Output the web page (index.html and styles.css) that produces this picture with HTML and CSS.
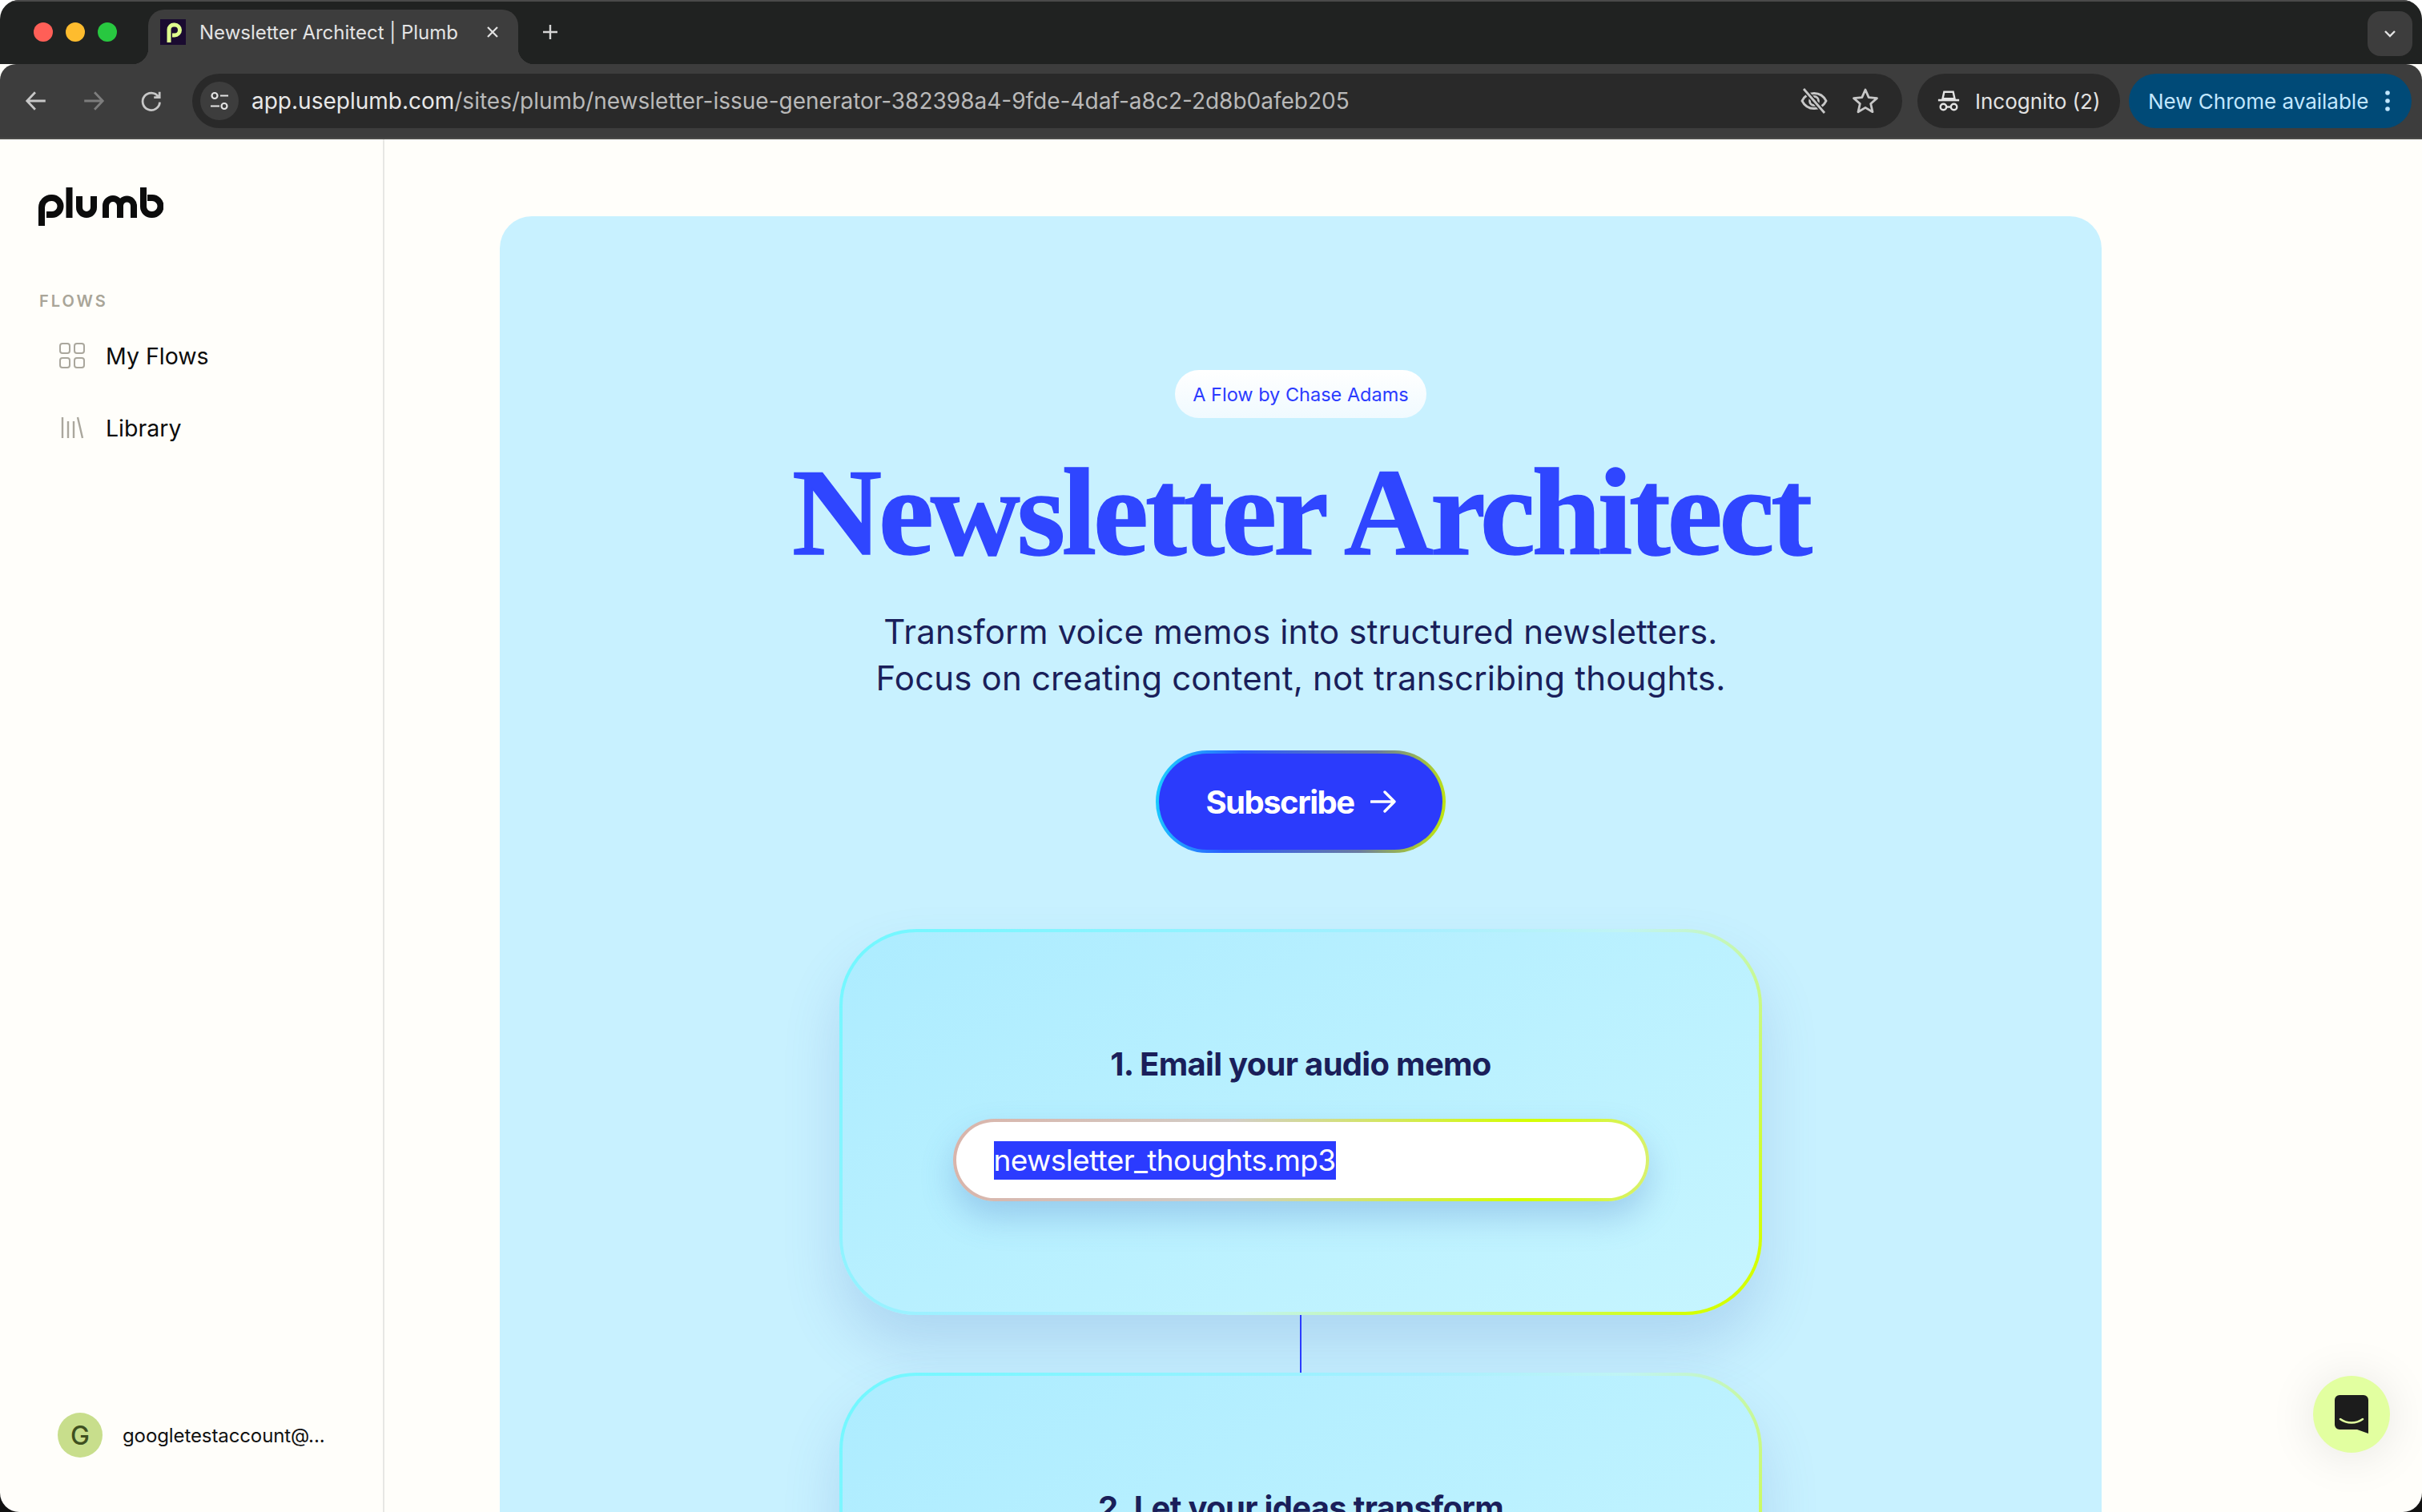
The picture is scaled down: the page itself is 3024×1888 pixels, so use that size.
FILE: index.html
```html
<!DOCTYPE html>
<html lang="en">

<head>
  <meta charset="UTF-8">
  <title>Newsletter Architect | Plumb</title>
  <link rel="stylesheet" href="styles.css">
</head>

<body>
  <div class="window">

    <!-- browser chrome -->
    <div class="tabStrip">
      <div class="lights">
        <span class="light red"></span>
        <span class="light yellow"></span>
        <span class="light green"></span>
      </div>
      <div class="tab">
        <svg class="favicon" viewBox="0 0 32 32">
          <rect width="32" height="32" fill="#1a0b30"/>
          <path d="M11 29V13a6 6 0 0 1 6-6h1a6.500 6.500 0 0 1 0 13h-3" fill="none" stroke="#dfff8e" stroke-width="5"/>
        </svg>
        <span class="tabTitle">Newsletter Architect | Plumb</span>
        <svg class="tabClose" viewBox="0 0 20 20"><path d="M4 4l12 12M16 4L4 16" stroke="#e3e3e3" stroke-width="2.200"/></svg>
      </div>
      <svg class="newTab" viewBox="0 0 24 24"><path d="M12 3v18M3 12h18" stroke="#d5d5d5" stroke-width="2.400"/></svg>
      <div class="tabSearch">
        <svg viewBox="0 0 20 20" width="20" height="20"><path d="M4 7l6 6 6-6" fill="none" stroke="#e3e3e3" stroke-width="2.400"/></svg>
      </div>
    </div>

    <div class="toolbar">
      <svg class="navIcon" viewBox="0 0 28 28"><path d="M25 14H4M13 4L3.500 14 13 24" fill="none" stroke="#c7c7c7" stroke-width="2.600"/></svg>
      <svg class="navIcon" viewBox="0 0 28 28"><path d="M3 14h21M15 4l9.500 10L15 24" fill="none" stroke="#7d7d7d" stroke-width="2.600"/></svg>
      <svg class="navIcon" viewBox="0 0 28 28"><path d="M22 9a10 10 0 1 0 1.800 6.500M23.500 3.500V10H17" fill="none" stroke="#c7c7c7" stroke-width="2.600"/></svg>

      <div class="urlBar">
        <span class="siteInfo">
          <svg viewBox="0 0 28 28" width="28" height="28">
            <circle cx="8" cy="7.500" r="3.500" fill="none" stroke="#e3e3e3" stroke-width="2.200"/>
            <circle cx="20" cy="20.500" r="3.500" fill="none" stroke="#e3e3e3" stroke-width="2.200"/>
            <path d="M15 7.500h10M3 20.500h11" stroke="#e3e3e3" stroke-width="2.200"/>
          </svg>
        </span>
        <span class="url"><span class="urlHost">app.useplumb.com</span>/sites/plumb/newsletter-issue-generator-382398a4-9fde-4daf-a8c2-2d8b0afeb205</span>
        <svg class="urlIcon" viewBox="0 0 36 36">
          <path d="M3 18c3-6 8.500-9.500 15-9.500S30 12 33 18c-3 6-8.500 9.500-15 9.500S6 24 3 18z" fill="none" stroke="#c7c7c7" stroke-width="2.800"/>
          <circle cx="18" cy="18" r="5.500" fill="none" stroke="#c7c7c7" stroke-width="2.800"/>
          <path d="M5 3l26 30" stroke="#292929" stroke-width="6"/>
          <path d="M5 3l26 30" stroke="#c7c7c7" stroke-width="2.800"/>
        </svg>
        <svg class="urlIcon" viewBox="0 0 36 36">
          <path d="M18 4l4.200 9.600 10.300 1-7.800 6.900 2.300 10.200L18 26.400l-9 5.300 2.300-10.200-7.800-6.900 10.300-1z" fill="none" stroke="#c7c7c7" stroke-width="2.800" stroke-linejoin="round"/>
        </svg>
      </div>

      <div class="incognito">
        <svg viewBox="0 0 32 32" width="30" height="30">
          <path d="M8 13l2-9h12l2 9z" fill="none" stroke="#e3e3e3" stroke-width="2.600"/>
          <path d="M2 15h28" stroke="#e3e3e3" stroke-width="2.800"/>
          <circle cx="9" cy="24" r="4" fill="none" stroke="#e3e3e3" stroke-width="2.600"/>
          <circle cx="23" cy="24" r="4" fill="none" stroke="#e3e3e3" stroke-width="2.600"/>
          <path d="M13 24h6" stroke="#e3e3e3" stroke-width="2.600"/>
        </svg>
        <span>Incognito (2)</span>
      </div>

      <div class="updateChip">
        <span>New Chrome available</span>
        <svg viewBox="0 0 8 28" width="8" height="28">
          <circle cx="4" cy="4" r="2.800" fill="#c2e7ff"/>
          <circle cx="4" cy="14" r="2.800" fill="#c2e7ff"/>
          <circle cx="4" cy="24" r="2.800" fill="#c2e7ff"/>
        </svg>
      </div>
    </div>

    <!-- page -->
    <div class="app">
      <div class="sidebar">
        <svg class="logo" viewBox="0 0 156 50" role="img" aria-label="plumb">
          <g fill="none" stroke="#0c0c0c" stroke-width="8">
            <path d="M4 50V27a12 12 0 0 1 12-12h1a10.500 10.500 0 0 1 0 21H10"/>
            <path d="M38.500 2v38"/>
            <path d="M51 13v14a9 9 0 0 0 18 0V13"/>
            <path d="M84 40V25a9 9 0 0 1 18 0v15M102 25a8.500 8.500 0 0 1 17 0v15"/>
            <path d="M131 2v24a10 10 0 0 0 10 10h1a10.500 10.500 0 0 0 0-21h-6"/>
          </g>
        </svg>

        <div class="navLabel">FLOWS</div>

        <a class="navItem">
          <svg class="navItemIcon" viewBox="0 0 32 32">
            <g fill="none" stroke="#aaa79d" stroke-width="2">
              <rect x="1" y="1" width="12" height="12" rx="3"/>
              <rect x="19" y="1" width="12" height="12" rx="3"/>
              <rect x="1" y="19" width="12" height="12" rx="3"/>
              <rect x="19" y="19" width="12" height="12" rx="3"/>
            </g>
          </svg>
          <span>My Flows</span>
        </a>
        <a class="navItem">
          <svg class="navItemIcon" viewBox="0 0 32 32">
            <path d="M4 3v26M11 8v21M18 8v21M23 3l6 26" fill="none" stroke="#aaa79d" stroke-width="2.400"/>
          </svg>
          <span>Library</span>
        </a>

        <div class="userRow">
          <span class="avatar">G</span>
          <span class="userName">googletestaccount@...</span>
        </div>
      </div>

      <div class="main">
        <div class="hero">
          <div class="byline">A Flow by Chase Adams</div>
          <h1 class="title">Newsletter Architect</h1>
          <p class="subtitle">Transform voice memos into structured newsletters.<br>Focus on creating content, not transcribing thoughts.</p>
          <button class="subscribe">
            Subscribe
            <svg viewBox="0 0 32 28" width="32" height="28"><path d="M1 14h29M18 2l12 12-12 12" fill="none" stroke="#fff" stroke-width="3.400" stroke-linecap="round" stroke-linejoin="round"/></svg>
          </button>

          <div class="step">
            <h2 class="stepTitle">1. Email your audio memo</h2>
            <div class="fileInput"><span class="selected">newsletter_thoughts.mp3</span></div>
          </div>
          <div class="connector"></div>
          <div class="step">
            <h2 class="stepTitle">2. Let your ideas transform</h2>
          </div>
        </div>
      </div>
    </div>

    <div class="chatBubble">
      <svg viewBox="0 0 42 48" width="42" height="48">
        <path d="M6 0h30a6 6 0 0 1 6 6v42l-14-5H6a6 6 0 0 1-6-6V6a6 6 0 0 1 6-6z" fill="#1c1c1c"/>
        <path d="M7 30c8 6 20 6 28 0" fill="none" stroke="#e2ffa0" stroke-width="2.600" stroke-linecap="round"/>
      </svg>
    </div>

  </div>
</body>

</html>
```

FILE: styles.css
```css
html {
  background: linear-gradient(#fff 50%, #111 50%);
}

body {
  margin: 0;
  height: 1888px;
  overflow: hidden;
  font-family: Inter, "Liberation Sans", sans-serif;
}

.window {
  position: relative;
  height: 1888px;
  border-radius: 24px;
  overflow: hidden;
  background: #fffefa;
  display: flex;
  flex-direction: column;
}

/* browser chrome */

.tabStrip {
  height: 78px;
  border-top: 2px solid #4a4a4a;
  background: #202221;
  display: flex;
  align-items: flex-end;
  flex-shrink: 0;
}

.lights {
  display: flex;
  gap: 16px;
  padding: 0 0 28px 42px;
  width: 143px;
}

.light {
  width: 24px;
  height: 24px;
  border-radius: 50%;
}

.red { background: #ff5f57; }
.yellow { background: #febc2e; }
.green { background: #28c840; }

.tab {
  position: relative;
  width: 462px;
  height: 68px;
  box-sizing: border-box;
  padding: 0 22px 12px 15px;
  background: #3d3d3d;
  border-radius: 20px 20px 0 0;
  display: flex;
  align-items: center;
}

.tab::before,
.tab::after {
  content: '';
  position: absolute;
  bottom: 0;
  width: 20px;
  height: 20px;
}

.tab::before {
  left: -20px;
  background: radial-gradient(circle at 0 0, #202221 20px, #3d3d3d 20.500px);
}

.tab::after {
  right: -20px;
  background: radial-gradient(circle at 100% 0, #202221 20px, #3d3d3d 20.500px);
}

.favicon {
  width: 32px;
  height: 32px;
  flex-shrink: 0;
}

.tabTitle {
  margin-left: 17px;
  font-size: 24px;
  color: #e3e3e3;
  white-space: nowrap;
  flex: 1;
}

.tabClose {
  width: 20px;
  height: 20px;
}

.newTab {
  width: 24px;
  height: 24px;
  margin: 0 0 28px 28px;
}

.tabSearch {
  margin: 0 12px 10px auto;
  width: 56px;
  height: 56px;
  border-radius: 16px;
  background: #3d3d3d;
  display: flex;
  align-items: center;
  justify-content: center;
}

.toolbar {
  height: 94px;
  box-sizing: border-box;
  padding: 0 12px 0 30px;
  background: #3d3d3d;
  border-bottom: 2px solid #4b4b49;
  border-radius: 20px 20px 0 0;
  display: flex;
  align-items: center;
  flex-shrink: 0;
}

.navIcon {
  width: 30px;
  height: 30px;
  margin-right: 42px;
}

.navIcon:nth-child(3) {
  margin-right: 36px;
}

.urlBar {
  width: 2135px;
  height: 68px;
  box-sizing: border-box;
  padding: 0 28px 0 10px;
  background: #292929;
  border-radius: 34px;
  display: flex;
  align-items: center;
}

.siteInfo {
  width: 48px;
  height: 48px;
  border-radius: 50%;
  background: #3d3d3d;
  display: flex;
  align-items: center;
  justify-content: center;
}

.url {
  margin-left: 16px;
  font-size: 28px;
  color: #b9b9b9;
  white-space: nowrap;
  flex: 1;
}

.urlHost {
  color: #e8e8e8;
}

.urlIcon {
  width: 36px;
  height: 36px;
  margin-left: 28px;
}

.incognito {
  margin-left: 19px;
  width: 253px;
  height: 68px;
  box-sizing: border-box;
  padding-left: 24px;
  border-radius: 34px;
  background: #292929;
  color: #e3e3e3;
  font-size: 26px;
  display: flex;
  align-items: center;
  gap: 18px;
}

.updateChip {
  margin-left: 11px;
  width: 353px;
  height: 68px;
  box-sizing: border-box;
  padding: 0 26px 0 24px;
  border-radius: 34px;
  background: #004a77;
  color: #c2e7ff;
  font-size: 26px;
  display: flex;
  align-items: center;
  justify-content: space-between;
  white-space: nowrap;
}

/* page */

.app {
  flex: 1;
  display: flex;
  min-height: 0;
}

.sidebar {
  width: 480px;
  box-sizing: border-box;
  border-right: 2px solid #e7e7e4;
  padding: 58px 0 0 48px;
  display: flex;
  flex-direction: column;
  flex-shrink: 0;
}

.logo {
  width: 156px;
  height: 50px;
  flex-shrink: 0;
}

.navLabel {
  margin: 82px 0 11px 1px;
  font-size: 20px;
  font-weight: 600;
  letter-spacing: 3px;
  color: #a9a598;
}

.navItem {
  height: 90px;
  padding-left: 26px;
  display: flex;
  align-items: center;
  gap: 26px;
  font-size: 28.500px;
  color: #0c0c0c;
}

.navItemIcon {
  width: 32px;
  height: 32px;
}

.userRow {
  margin-top: auto;
  margin-bottom: 68px;
  padding-left: 24px;
  display: flex;
  align-items: center;
  gap: 25px;
}

.avatar {
  width: 56px;
  height: 56px;
  border-radius: 50%;
  background: #c8de8c;
  color: #3f5020;
  font-size: 32px;
  font-weight: 500;
  display: flex;
  align-items: center;
  justify-content: center;
}

.userName {
  font-size: 24px;
  letter-spacing: -0.100px;
  color: #111;
  white-space: nowrap;
}

.main {
  flex: 1;
  min-width: 0;
  padding: 96px 0 0 144px;
}

.hero {
  width: 2000px;
  box-sizing: border-box;
  height: 1800px;
  padding-top: 192px;
  background: #c8f1ff;
  border-radius: 40px;
  display: flex;
  flex-direction: column;
  align-items: center;
}

.byline {
  height: 60px;
  width: 314px;
  flex-shrink: 0;
  border-radius: 30px;
  background: linear-gradient(#fff, #f0faff);
  color: #2b3bff;
  font-size: 23.500px;
  display: flex;
  align-items: center;
  justify-content: center;
  white-space: nowrap;
}

.title {
  margin: 28px 0 0;
  flex-shrink: 0;
  font-family: "Liberation Serif", serif;
  font-weight: 700;
  font-size: 155px;
  line-height: 180px;
  letter-spacing: -4px;
  -webkit-text-stroke: 1.500px #2f46ff;
  color: #2f46ff;
  white-space: nowrap;
}

.subtitle {
  margin: 30px 0 0;
  flex-shrink: 0;
  font-size: 42px;
  line-height: 58px;
  letter-spacing: 0.160px;
  color: #1a1f5a;
  text-align: center;
  white-space: nowrap;
}

.subscribe {
  margin-top: 61px;
  width: 362px;
  height: 128px;
  border: 4px solid transparent;
  border-radius: 64px;
  background: linear-gradient(#2b3bfc, #2b3bfc) padding-box,
    linear-gradient(100deg, #18d8ff 0%, #2b5bff 28%, #6a7ba0 72%, #c8f000 100%) border-box;
  color: #fff;
  font-family: inherit;
  font-size: 40px;
  font-weight: 700;
  letter-spacing: -1.500px;
  display: flex;
  align-items: center;
  justify-content: center;
  gap: 20px;
  flex-shrink: 0;
}

.step {
  width: 1152px;
  height: 482px;
  flex-shrink: 0;
  box-sizing: border-box;
  padding-top: 135px;
  border: 4px solid transparent;
  border-radius: 96px;
  background: linear-gradient(150deg, #adecff, #c6f5ff) padding-box,
    linear-gradient(135deg, #6ff8ff 0%, #a8efff 45%, #c0f4f4 60%, #d4ff00 95%) border-box;
  box-shadow: 0 40px 70px rgba(70, 110, 190, 0.2);
  display: flex;
  flex-direction: column;
  align-items: center;
}

.subscribe + .step {
  margin-top: 95px;
}

.stepTitle {
  margin: 0;
  font-size: 40px;
  font-weight: 700;
  line-height: 60px;
  letter-spacing: -0.700px;
  color: #1a1f5a;
  white-space: nowrap;
}

.fileInput {
  margin-top: 38px;
  width: 869px;
  height: 103px;
  box-sizing: border-box;
  padding-left: 47px;
  border: 4px solid transparent;
  border-radius: 52px;
  background: linear-gradient(#fff, #fff) padding-box,
    linear-gradient(95deg, #d9b4aa 0%, #d2cdc6 40%, #d4ff00 82%, #d8f070 100%) border-box;
  box-shadow: 0 20px 40px rgba(70, 110, 190, 0.28);
  display: flex;
  align-items: center;
}

.selected {
  background: #2b3bff;
  color: #fff;
  font-size: 37px;
  line-height: 48px;
  letter-spacing: -0.600px;
}

.connector {
  width: 2px;
  height: 72px;
  flex-shrink: 0;
  background: #2b3bff;
}

.chatBubble {
  position: absolute;
  left: 2888px;
  top: 1718px;
  width: 96px;
  height: 96px;
  border-radius: 50%;
  background: #e2ffa0;
  box-shadow: 0 4px 60px rgba(0, 0, 0, 0.1);
  display: flex;
  align-items: center;
  justify-content: center;
}
```
